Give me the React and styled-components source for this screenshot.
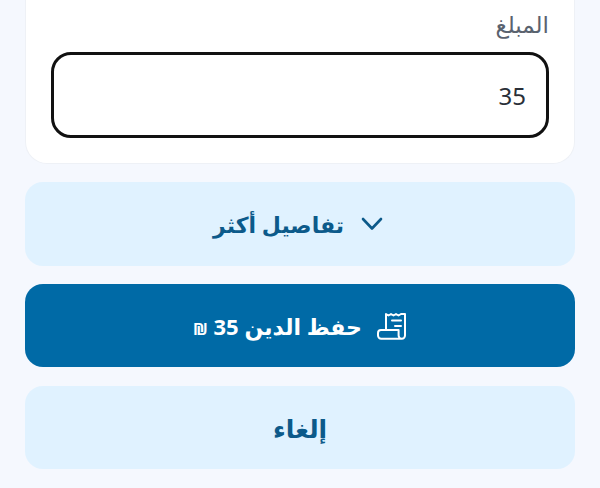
import React from "react";
import styled, { createGlobalStyle } from "styled-components";

const Global = createGlobalStyle`
  html, body { margin: 0; padding: 0; background: #f5f8fe; }
  body { font-family: "Noto Sans", "DejaVu Sans", "Liberation Sans", sans-serif; }
`;

const Page = styled.div`
  width: 600px;
  height: 488px;
  overflow: hidden;
  box-sizing: border-box;
  padding: 0 25px;
  display: flex;
  flex-direction: column;
  background: #f5f8fe;
`;

const Card = styled.section`
  height: 164px;
  box-sizing: border-box;
  background: #fff;
  border: 1px solid #eef1f6;
  border-top: none;
  border-radius: 0 0 22px 22px;
  padding: 9px 25px 0;
  display: flex;
  flex-direction: column;
  margin-bottom: 18px;
`;

const Label = styled.label`
  height: 43px;
  font-size: 23px;
  line-height: 30px;
  color: #59626f;
  text-align: right;
`;

const Amount = styled.input`
  height: 86px;
  width: 100%;
  box-sizing: border-box;
  border: 3px solid #111;
  border-radius: 20px;
  background: #fff;
  padding: 0 20px;
  font-family: "Noto Sans", sans-serif;
  font-size: 24px;
  color: #2a2f38;
  text-align: right;
  outline: none;
`;

const Action = styled.button`
  height: ${(p) => p.$h || 84}px;
  margin-bottom: ${(p) => p.$mb || 18}px;
  width: 100%;
  border: none;
  border-radius: 18px;
  background: ${(p) => (p.$primary ? "#006aa6" : "#e0f2ff")};
  color: ${(p) => (p.$primary ? "#fff" : "#0c5a8a")};
  font-family: "Noto Sans", "DejaVu Sans", sans-serif;
  font-size: ${(p) => p.$size || 22}px;
  font-weight: 700;
  display: flex;
  align-items: center;
  justify-content: center;
  gap: ${(p) => p.$gap || 15}px;
  direction: rtl;
  padding: 0 ${(p) => p.$shift || 0}px 0 0;
`;

const Shekel = styled.span`
  font-size: 16px;
  font-weight: 700;
`;

const Chevron = () => (
  <svg width="22" height="24" viewBox="0 0 22 24" fill="none" stroke="currentColor" strokeWidth="2.6" strokeLinecap="round" strokeLinejoin="round">
    <path d="M2 7 L11 16.5 L20 7" />
  </svg>
);

const Receipt = () => (
  <svg width="30" height="28" viewBox="0 0 30 28" fill="none" stroke="currentColor" strokeWidth="2" strokeLinecap="round" strokeLinejoin="round">
    <path d="M9 18 V2 l2.5 1.5 L14 2 l2.5 1.5 L19 2 l2.5 1.5 L24 2 h4 V23.5 a3.2 3.2 0 0 1-3.2 3.2 a3.2 3.2 0 0 1-3.2-3.2 V18 H4 a3 3 0 0 0-3 3 v2.5 a3.2 3.2 0 0 0 3.2 3.2 H24.8" />
    <path d="M15 8.5 h9 M18 14 h6" />
  </svg>
);

export default function App() {
  return (
    <>
      <Global />
      <Page dir="rtl">
        <Card>
          <Label htmlFor="amount">المبلغ</Label>
          <Amount id="amount" defaultValue="35" />
        </Card>
        <Action $gap={17} $shift={4}>
          <Chevron />
          <span>تفاصيل أكثر</span>
        </Action>
        <Action $primary $h={83} $mb={19}>
          <Receipt />
          <span>حفظ الدين 35 <Shekel>₪</Shekel></span>
        </Action>
        <Action $h={83} $size={25}>
          <span>إلغاء</span>
        </Action>
      </Page>
    </>
  );
}
